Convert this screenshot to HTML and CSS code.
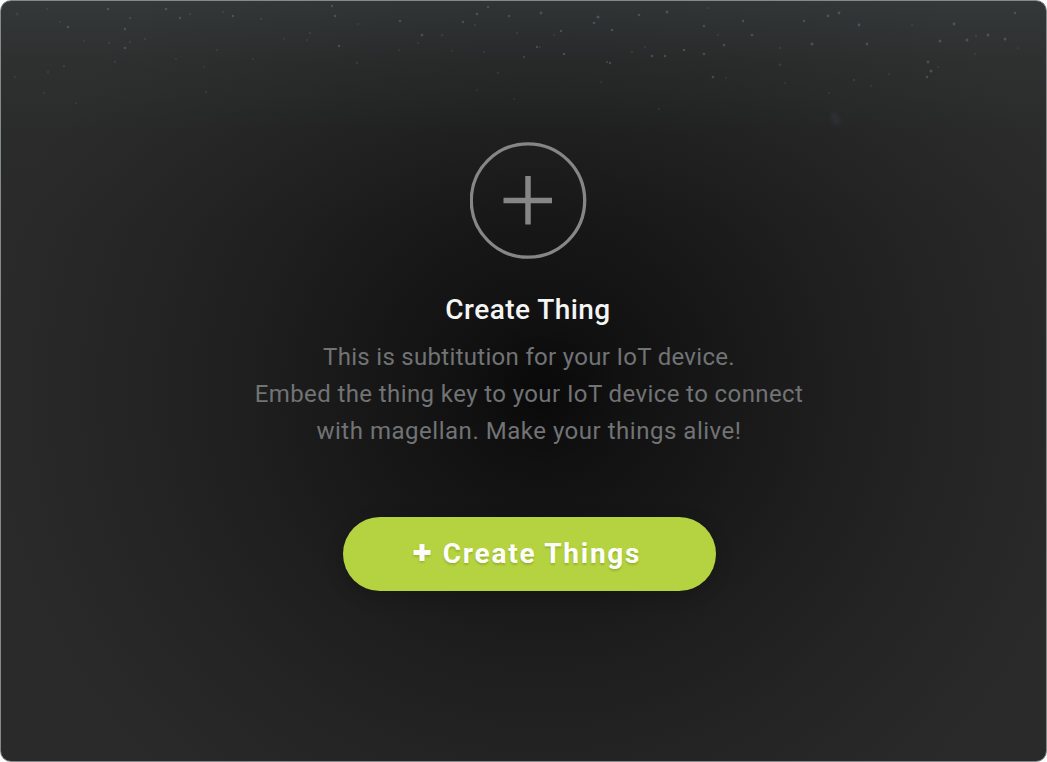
FILE: index.html
```html
<!DOCTYPE html>
<html lang="en">
<head>
<meta charset="utf-8">
<title>Create Thing</title>
<link rel="stylesheet" href="styles.css">
</head>
<body>
<main class="panel">
  <svg class="stars" viewBox="0 0 1047 140" aria-hidden="true">
    <g class="stars-faint">
      <circle cx="17" cy="14" r="1.5"/><circle cx="47" cy="9" r="1"/><circle cx="60" cy="22" r="1"/><circle cx="84" cy="41" r="1"/><circle cx="109" cy="43" r="1.3"/><circle cx="130" cy="42" r="1.2"/><circle cx="145" cy="39" r="1.2"/><circle cx="115" cy="62" r="1.3"/><circle cx="64" cy="66" r="1.3"/><circle cx="48" cy="72" r="1.2"/><circle cx="15" cy="77" r="1"/><circle cx="44" cy="93" r="1.2"/><circle cx="76" cy="103" r="1"/><circle cx="190" cy="14" r="1.3"/><circle cx="217" cy="50" r="1.2"/><circle cx="176" cy="59" r="1"/><circle cx="206" cy="92" r="1.2"/><circle cx="204" cy="67" r="1"/><circle cx="223" cy="12" r="1.2"/><circle cx="261" cy="19" r="1.2"/><circle cx="284" cy="39" r="1"/><circle cx="253" cy="59" r="1"/><circle cx="310" cy="33" r="1.2"/><circle cx="307" cy="40" r="1"/><circle cx="358" cy="24" r="1"/><circle cx="418" cy="43" r="1"/><circle cx="442" cy="35" r="1.2"/><circle cx="475" cy="25" r="1.2"/><circle cx="452" cy="51" r="1"/><circle cx="484" cy="52" r="1"/><circle cx="357" cy="63" r="1.2"/><circle cx="399" cy="50" r="1"/><circle cx="517" cy="33" r="1.2"/><circle cx="554" cy="35" r="1"/><circle cx="477" cy="90" r="1"/><circle cx="514" cy="99" r="1"/><circle cx="498" cy="73" r="1.2"/><circle cx="601" cy="82" r="1"/><circle cx="645" cy="47" r="1.2"/><circle cx="632" cy="52" r="1.2"/><circle cx="659" cy="109" r="1"/><circle cx="708" cy="8" r="1"/><circle cx="718" cy="35" r="1"/><circle cx="780" cy="48" r="1.2"/><circle cx="780" cy="65" r="1.4"/><circle cx="726" cy="78" r="1"/><circle cx="785" cy="83" r="1"/><circle cx="854" cy="80" r="1.3"/><circle cx="889" cy="74" r="1"/><circle cx="871" cy="86" r="1"/><circle cx="829" cy="93" r="1"/><circle cx="976" cy="36" r="1.2"/><circle cx="912" cy="25" r="1"/><circle cx="975" cy="54" r="1"/><circle cx="1018" cy="48" r="1"/><circle cx="938" cy="67" r="1"/><circle cx="540" cy="47" r="1"/>
    </g>
    <g class="stars-bright">
      <circle cx="68" cy="27" r="1.3"/><circle cx="108" cy="9" r="1.3"/><circle cx="130" cy="18" r="1"/><circle cx="166" cy="9" r="1.3"/><circle cx="180" cy="18" r="1.2"/><circle cx="125" cy="29" r="1.2"/><circle cx="125" cy="48" r="1.3"/><circle cx="233" cy="16" r="1.2"/><circle cx="332" cy="6" r="1.2"/><circle cx="335" cy="16" r="1.2"/><circle cx="339" cy="46" r="1.2"/><circle cx="400" cy="21" r="1.2"/><circle cx="422" cy="35" r="1.3"/><circle cx="463" cy="22" r="1.2"/><circle cx="477" cy="14" r="1.3"/><circle cx="488" cy="7" r="1.2"/><circle cx="509" cy="16" r="1.2"/><circle cx="541" cy="13" r="1.4"/><circle cx="561" cy="31" r="1.2"/><circle cx="537" cy="47" r="1.2"/><circle cx="524" cy="57" r="1"/><circle cx="564" cy="54" r="1.3"/><circle cx="598" cy="17" r="1.6"/><circle cx="594" cy="23" r="1.3"/><circle cx="612" cy="30" r="1.3"/><circle cx="639" cy="15" r="1.3"/><circle cx="667" cy="12" r="1.5"/><circle cx="652" cy="56" r="1.3"/><circle cx="665" cy="56" r="1.3"/><circle cx="684" cy="50" r="1.3"/><circle cx="607" cy="62" r="1"/><circle cx="610" cy="63" r="1.2"/><circle cx="704" cy="26" r="1.3"/><circle cx="743" cy="21" r="1.2"/><circle cx="752" cy="35" r="1.3"/><circle cx="724" cy="45" r="1.3"/><circle cx="704" cy="54" r="1.3"/><circle cx="713" cy="77" r="1.3"/><circle cx="828" cy="16" r="1.4"/><circle cx="839" cy="13" r="1.4"/><circle cx="804" cy="21" r="1.2"/><circle cx="859" cy="25" r="1.4"/><circle cx="812" cy="44" r="1.5"/><circle cx="867" cy="44" r="1.4"/><circle cx="954" cy="24" r="1.4"/><circle cx="940" cy="41" r="1.5"/><circle cx="967" cy="40" r="1.5"/><circle cx="988" cy="35" r="1.5"/><circle cx="1005" cy="39" r="1.5"/><circle cx="928" cy="62" r="1.4"/><circle cx="931" cy="71" r="1.5"/><circle cx="927" cy="77" r="1.2"/><circle cx="1015" cy="13" r="1.3"/>
    </g>
    <g class="stars-haze"><circle cx="834" cy="116" r="4"/><circle cx="837" cy="121" r="4"/></g>
  </svg>
  <section class="empty-state">
    <svg class="add-icon" viewBox="0 0 118 118" aria-hidden="true">
      <circle cx="58" cy="59.5" r="56.7"/>
      <path d="M33.5 59.5H82M58 35V83.5"/>
    </svg>
    <h1 class="title">Create Thing</h1>
    <p class="description">
      <span class="line line-first">This is subtitution for your IoT device.</span>
      <span class="line line-second">Embed the thing key to your IoT device to connect</span>
      <span class="line line-third">with magellan. Make your things alive!</span>
    </p>
    <button class="create-button" type="button">
      <svg class="button-plus" viewBox="0 0 18 19" aria-hidden="true"><path d="M.5 8.5H17.5M9 0V17"/></svg>
      <span>Create Things</span>
    </button>
  </section>
</main>
</body>
</html>
```
FILE: styles.css
```css
* { box-sizing: border-box; }

body {
  margin: 0;
  background: #fff;
  font-family: Roboto, "Open Sans", sans-serif;
}

.panel {
  display: grid;
  width: 1047px;
  height: 762px;
  overflow: hidden;
  border: 1px solid #858989;
  border-radius: 11px;
  background:
    linear-gradient(rgba(65, 75, 76, .42) 0, rgba(60, 67, 68, .24) 60px, rgba(55, 58, 58, .08) 130px, transparent 220px),
    radial-gradient(ellipse 560px 540px at 541px 390px, #090909 0, #111111 14%, #181818 34%, #1f1f1f 54%, #252525 76%, #2a2a2a 100%);
}

.stars, .empty-state { grid-area: 1 / 1; }

.stars {
  width: 1047px;
  height: 140px;
  margin: -1px 0 0 -1px;
}

.stars-faint { fill: #839094; opacity: .16; filter: blur(.5px); }
.stars-bright { fill: #8d9ba0; opacity: .3; filter: blur(.6px); }
.stars-haze { fill: #59627a; opacity: .14; filter: blur(2px); }

.empty-state {
  display: flex;
  flex-direction: column;
  align-items: center;
  padding: 140px 0 0 10px;
}

.add-icon {
  width: 118px;
  height: 118px;
  fill: none;
  stroke: #868686;
  stroke-width: 3.3;
}

.add-icon path { stroke-width: 5.5; }

.title {
  margin: 32px 0 10px;
  padding-right: 2px;
  color: #f5f5f5;
  font-size: 28px;
  font-weight: 500;
  line-height: 38px;
  letter-spacing: .45px;
}

.description {
  display: flex;
  flex-direction: column;
  align-items: center;
  margin: 0;
  color: #717375;
  font-size: 24px;
  font-weight: 400;
  line-height: 37px;
  white-space: nowrap;
}

.line-first { letter-spacing: .3px; }
.line-second { letter-spacing: .4px; }
.line-third { letter-spacing: .52px; }

.create-button {
  display: flex;
  align-items: center;
  justify-content: center;
  gap: 12px;
  width: 373px;
  height: 74px;
  margin: 67px 0 0;
  padding: 0 4px 1px 0;
  border: 0;
  border-radius: 37px;
  background: #b5d340;
  box-shadow: 0 4px 18px rgba(0, 0, 0, .18);
  color: #fff;
  font: 700 28px/38px Roboto, "Open Sans", sans-serif;
  letter-spacing: 1.75px;
  text-shadow: 0 2px 2px rgba(70, 90, 0, .25);
}

.button-plus {
  width: 18px;
  height: 19px;
  fill: none;
  stroke: #fff;
  stroke-width: 5;
  filter: drop-shadow(0 2px 1px rgba(70, 90, 0, .2));
}
```
